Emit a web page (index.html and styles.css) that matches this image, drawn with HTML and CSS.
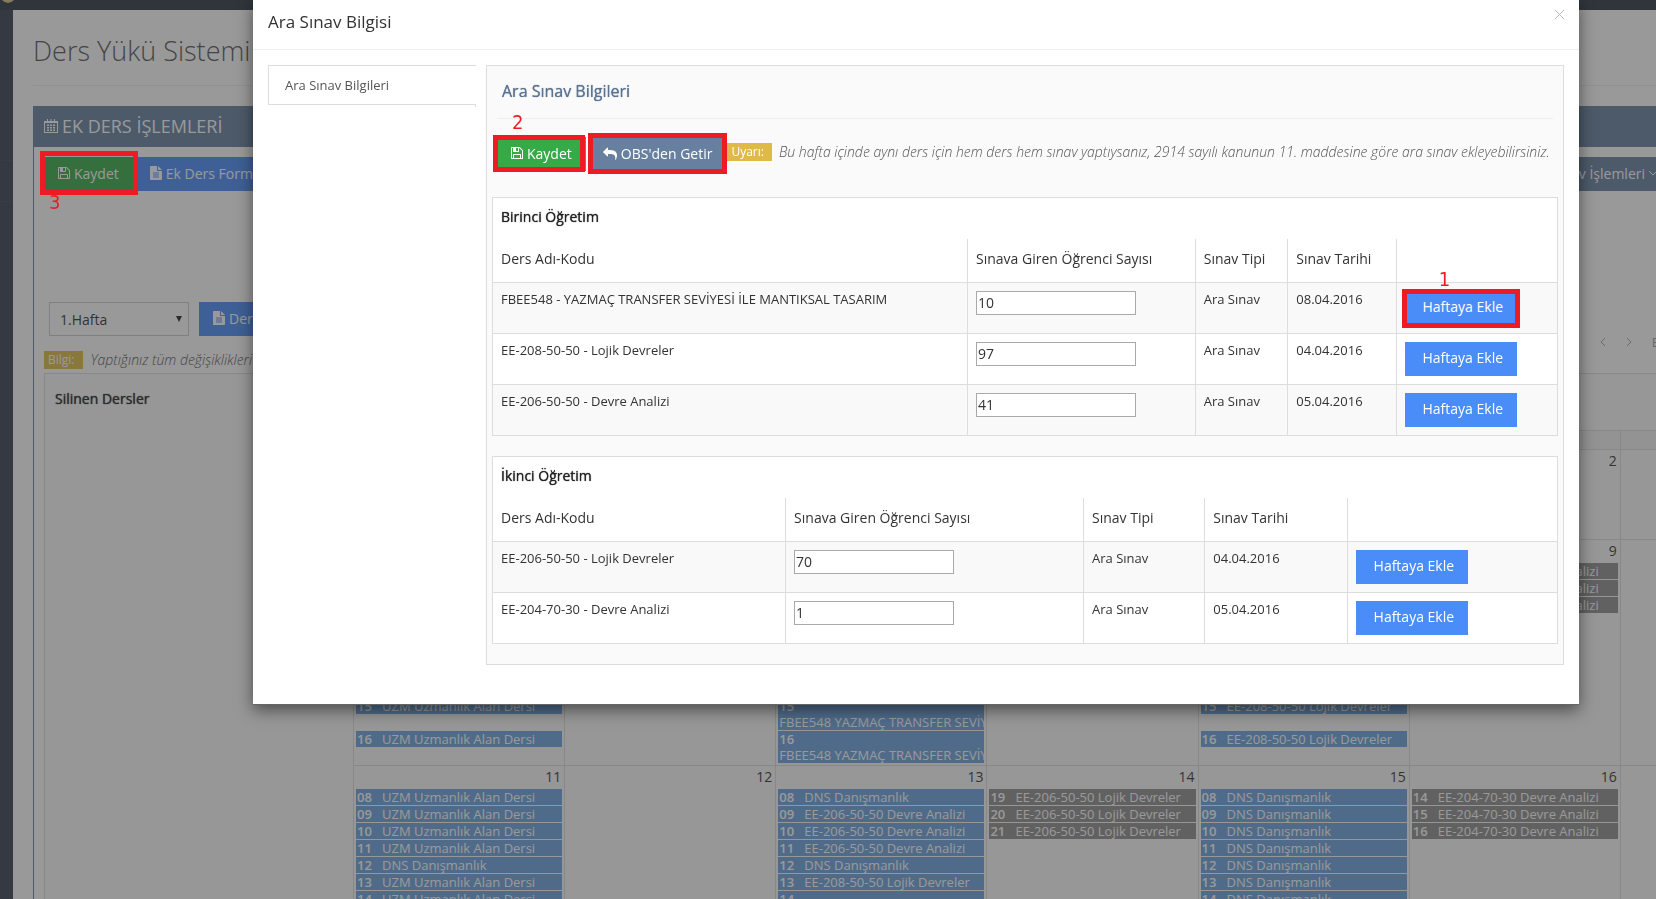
FILE: index.html
```html
<!DOCTYPE html>
<html lang="tr">
<head>
<meta charset="utf-8">
<title>Ders Yükü Sistemi</title>
<link rel="stylesheet" href="styles.css">
</head>
<body>
<svg class="sprite" aria-hidden="true">
  <symbol id="i-save" viewBox="0 0 1536 1536"><path d="M384 1408h768v-384H384v384zm896 0h128V512q0-14-10-38.500T1378 439l-281-281q-10-10-34-20t-39-10v416q0 40-28 68t-68 28H352q-40 0-68-28t-28-68V128H128v1280h128V992q0-40 28-68t68-28h832q40 0 68 28t28 68v416zM896 480V160q0-13-9.500-22.500T864 128H672q-13 0-22.500 9.500T640 160v320q0 13 9.500 22.500T672 512h192q13 0 22.500-9.500T896 480zm640 32v928q0 40-28 68t-68 28H96q-40 0-68-28t-28-68V96q0-40 28-68T96 0h928q40 0 88 20t76 48l280 280q28 28 48 76t20 88z"/></symbol>
  <symbol id="i-reply" viewBox="0 0 1792 1664"><path transform="matrix(-1 0 0 1 1792 0)" d="M1792 640q0 26-19 45l-512 512q-19 19-45 19t-45-19-19-45V896H928q-98 0-175.500 6t-154 21.500-133 42.500-105.500 69.500-80 101-48.500 138.500-17.500 181q0 55 5 123 0 6 2.500 23.500t2.500 26.500q0 15-8.500 25t-23.500 10q-16 0-28-17-7-9-13-22t-13.500-30-10.500-24Q0 1286 0 1120q0-199 53-333 162-403 875-403h224V128q0-26 19-45t45-19 45 19l512 512q19 19 19 45z"/></symbol>
  <symbol id="i-file" viewBox="0 0 12 14"><path fill-rule="evenodd" d="M0 .7Q0 0 .7 0H7v4.300q0 .7.700.700H12v8.300q0 .7-.7.700H.7q-.7 0-.7-.7zM3 6.500v1h6v-1zm0 2v1h6v-1zm0 2v1h6v-1zM8 0l4 4H8z"/></symbol>
  <symbol id="i-cal" viewBox="0 0 14 14"><path fill-rule="evenodd" d="M0 2h3V0h1v2h2.500V0h1v2H10V0h1v2h3v12H0zm1 2v9h12V4zm2 1.500h2V7H3zm3 0h2V7H6zm3 0h2V7H9zM3 8h2v1.500H3zm3 0h2v1.500H6zm3 0h2v1.500H9zM3 10.500h2V12H3zm3 0h2V12H6zm3 0h2V12H9z"/></symbol>
</svg>

<header class="topbar"><svg class="logo" viewBox="0 0 16 4" aria-hidden="true"><path d="M2 0h12q-6 6-12 0z" fill="#d8c48c"/></svg></header>
<div class="shell">
  <nav class="sidebar"><span></span><span></span></nav>
  <main class="content">
    <h1>Ders Yükü Sistemi</h1>
    <section class="portlet">
      <h2 class="caption"><svg class="ic-cal"><use href="#i-cal"/></svg>EK DERS İŞLEMLERİ</h2>
      <div class="toolbar">
        <span class="mark mark3"><button class="btn green"><svg class="ic"><use href="#i-save"/></svg>Kaydet</button><b class="num">3</b></span>
        <button class="btn blue wide"><svg class="ic ic-file"><use href="#i-file"/></svg>Ek Ders Form</button>
        <button class="btn hoki right">Sınav İşlemleri<svg class="chev" viewBox="0 0 8 8"><path d="M0 2l4 4 4-4"/></svg></button>
      </div>
      <div class="weekbar">
        <select aria-label="Hafta"><option>1.Hafta</option></select>
        <button class="btn blue"><svg class="ic ic-file"><use href="#i-file"/></svg>Der</button>
        <div class="pager">
          <button aria-label="Önceki"><svg viewBox="0 0 6 10"><path d="M5 1L1 5l4 4"/></svg></button>
          <button aria-label="Sonraki"><svg viewBox="0 0 6 10"><path d="M1 1l4 4-4 4"/></svg></button>
          <button>Bugün</button>
        </div>
      </div>
      <p class="note"><span class="label">Bilgi:</span><em>Yaptığınız tüm değişiklikleri</em></p>
      <div class="planner">
        <aside><h3>Silinen Dersler</h3></aside>
        <table class="calendar">
          <thead><tr><th></th><th></th><th></th><th></th><th></th><th></th><th></th></tr></thead>
          <tbody>
            <tr class="first"><td></td><td></td><td></td><td></td><td></td><td><i>2</i></td><td></td></tr>
            <tr class="second">
              <td><div class="later"><p class="ev"><b>15</b>UZM Uzmanlık Alan Dersi</p><p class="ev gap"><b>16</b>UZM Uzmanlık Alan Dersi</p></div></td>
              <td></td>
              <td><div class="later"><p class="ev two"><b>15</b><br>FBEE548 YAZMAÇ TRANSFER SEVİYESİ</p><p class="ev two"><b>16</b><br>FBEE548 YAZMAÇ TRANSFER SEVİYESİ</p></div></td>
              <td></td>
              <td><div class="later"><p class="ev"><b>15</b>EE-208-50-50 Lojik Devreler</p><p class="ev gap"><b>16</b>EE-208-50-50 Lojik Devreler</p></div></td>
              <td><i>9</i><p class="ev gray"><b>14</b>EE-204-70-30 Devre Analizi</p><p class="ev gray"><b>15</b>EE-204-70-30 Devre Analizi</p><p class="ev gray"><b>16</b>EE-204-70-30 Devre Analizi</p></td>
              <td></td>
            </tr>
            <tr>
              <td><i>11</i><p class="ev"><b>08</b>UZM Uzmanlık Alan Dersi</p><p class="ev"><b>09</b>UZM Uzmanlık Alan Dersi</p><p class="ev"><b>10</b>UZM Uzmanlık Alan Dersi</p><p class="ev"><b>11</b>UZM Uzmanlık Alan Dersi</p><p class="ev"><b>12</b>DNS Danışmanlık</p><p class="ev"><b>13</b>UZM Uzmanlık Alan Dersi</p><p class="ev"><b>14</b>UZM Uzmanlık Alan Dersi</p></td>
              <td><i>12</i></td>
              <td><i>13</i><p class="ev"><b>08</b>DNS Danışmanlık</p><p class="ev"><b>09</b>EE-206-50-50 Devre Analizi</p><p class="ev"><b>10</b>EE-206-50-50 Devre Analizi</p><p class="ev"><b>11</b>EE-206-50-50 Devre Analizi</p><p class="ev"><b>12</b>DNS Danışmanlık</p><p class="ev"><b>13</b>EE-208-50-50 Lojik Devreler</p><p class="ev"><b>14</b></p></td>
              <td><i>14</i><p class="ev gray"><b>19</b>EE-206-50-50 Lojik Devreler</p><p class="ev gray"><b>20</b>EE-206-50-50 Lojik Devreler</p><p class="ev gray"><b>21</b>EE-206-50-50 Lojik Devreler</p></td>
              <td><i>15</i><p class="ev"><b>08</b>DNS Danışmanlık</p><p class="ev"><b>09</b>DNS Danışmanlık</p><p class="ev"><b>10</b>DNS Danışmanlık</p><p class="ev"><b>11</b>DNS Danışmanlık</p><p class="ev"><b>12</b>DNS Danışmanlık</p><p class="ev"><b>13</b>DNS Danışmanlık</p><p class="ev"><b>14</b>DNS Danışmanlık</p></td>
              <td><i>16</i><p class="ev gray"><b>14</b>EE-204-70-30 Devre Analizi</p><p class="ev gray"><b>15</b>EE-204-70-30 Devre Analizi</p><p class="ev gray"><b>16</b>EE-204-70-30 Devre Analizi</p></td>
              <td></td>
            </tr>
          </tbody>
        </table>
      </div>
    </section>
  </main>
</div>

<div class="backdrop"></div>
<div class="modal" role="dialog" aria-labelledby="modal-title">
  <div class="modal-head">
    <h2 id="modal-title">Ara Sınav Bilgisi</h2>
    <button class="close" aria-label="Kapat"><svg viewBox="0 0 9 9"><path d="M0 0l9 9M9 0L0 9"/></svg></button>
  </div>
  <div class="modal-body">
    <nav class="tabs"><a href="#sinav">Ara Sınav Bilgileri</a></nav>
    <section class="pane" id="sinav">
      <h3>Ara Sınav Bilgileri</h3>
      <div class="actions">
        <span class="mark mark2"><button class="btn green"><svg class="ic"><use href="#i-save"/></svg>Kaydet</button><b class="num">2</b></span>
        <span class="mark markobs"><button class="btn hoki"><svg class="ic ic-reply"><use href="#i-reply"/></svg>OBS'den Getir</button></span>
        <p class="warn"><span class="label">Uyarı:</span><em>Bu hafta içinde aynı ders için hem ders hem sınav yaptıysanız, 2914 sayılı kanunun 11. maddesine göre ara sınav ekleyebilirsiniz.</em></p>
      </div>
      <div class="box">
        <h4>Birinci Öğretim</h4>
        <table class="grid one">
          <colgroup><col class="c1"><col class="c2"><col class="c3"><col class="c4"><col></colgroup>
          <thead><tr><th>Ders Adı-Kodu</th><th>Sınava Giren Öğrenci Sayısı</th><th>Sınav Tipi</th><th>Sınav Tarihi</th><th></th></tr></thead>
          <tbody>
            <tr><td>FBEE548 - YAZMAÇ TRANSFER SEVİYESİ İLE MANTIKSAL TASARIM</td><td><input type="text" aria-label="Öğrenci sayısı" value="10"></td><td>Ara Sınav</td><td>08.04.2016</td><td><span class="mark mark1"><button class="btn blue add">Haftaya Ekle</button><b class="num">1</b></span></td></tr>
            <tr><td>EE-208-50-50 - Lojik Devreler</td><td><input type="text" aria-label="Öğrenci sayısı" value="97"></td><td>Ara Sınav</td><td>04.04.2016</td><td><button class="btn blue add">Haftaya Ekle</button></td></tr>
            <tr><td>EE-206-50-50 - Devre Analizi</td><td><input type="text" aria-label="Öğrenci sayısı" value="41"></td><td>Ara Sınav</td><td>05.04.2016</td><td><button class="btn blue add">Haftaya Ekle</button></td></tr>
          </tbody>
        </table>
      </div>
      <div class="box">
        <h4>İkinci Öğretim</h4>
        <table class="grid two">
          <colgroup><col class="c1"><col class="c2"><col class="c3"><col class="c4"><col></colgroup>
          <thead><tr><th>Ders Adı-Kodu</th><th>Sınava Giren Öğrenci Sayısı</th><th>Sınav Tipi</th><th>Sınav Tarihi</th><th></th></tr></thead>
          <tbody>
            <tr><td>EE-206-50-50 - Lojik Devreler</td><td><input type="text" aria-label="Öğrenci sayısı" value="70"></td><td>Ara Sınav</td><td>04.04.2016</td><td><button class="btn blue add">Haftaya Ekle</button></td></tr>
            <tr><td>EE-204-70-30 - Devre Analizi</td><td><input type="text" aria-label="Öğrenci sayısı" value="1"></td><td>Ara Sınav</td><td>05.04.2016</td><td><button class="btn blue add">Haftaya Ekle</button></td></tr>
          </tbody>
        </table>
      </div>
    </section>
  </div>
</div>
</body>
</html>
```
FILE: styles.css
```css
* { box-sizing: border-box; }
html, body { height: 100%; }
body { margin: 0; overflow: hidden; background: #364150; color: #333; font: 13px/20px "Open Sans", "Noto Sans", sans-serif; }
h1, h2, h3, h4, p { margin: 0; font-weight: 400; }
button, input, select { font-family: inherit; color: inherit; }
button { border: 0; background: none; padding: 0; }
svg { fill: currentColor; flex: none; }
.sprite { position: absolute; width: 0; height: 0; }

.topbar { height: 10px; background: #2b3643; }
.logo { display: block; width: 16px; height: 4px; }
.shell { display: flex; }
.sidebar { width: 13px; flex: none; padding-top: 150px; }
.sidebar span { display: block; height: 41px; border-top: 1px solid #3d4957; }
.content { flex: none; width: calc(100% + 179px); background: #fff; padding: 24px 14px 0 20px; }
h1 { font-size: 27px; font-weight: 300; line-height: 34px; color: #555; padding-bottom: 17px; border-bottom: 1px solid #eee; margin-bottom: 20px; }

.portlet { border: 1px solid #67809f; border-top: 0; }
.caption { display: flex; align-items: center; gap: 4px; height: 41px; padding: 0 0 2px 10px; background: #67809f; color: #fff; font-size: 18px; }
.ic-cal { width: 14px; height: 14px; }
.toolbar { display: flex; gap: 5px; padding: 10px 10px 0; }
.btn { display: inline-flex; align-items: center; height: 34px; padding: 0 14px 2px; gap: 4px; color: #fff; font-size: 14px; white-space: nowrap; }
.green { background: #35aa47; }
.blue { background: #4b8df8; }
.hoki { background: #67809f; }
.ic { width: 12px; height: 12px; }
.ic-file { height: 14px; }
.ic-reply { width: 14px; height: 13px; }
.toolbar .green { padding: 0 14px 2px; }
.wide { width: 160px; padding: 0 12px 2px; }
.right { margin-left: auto; margin-right: 152px; }
.chev { width: 8px; height: 8px; fill: none; stroke: currentColor; }
.weekbar { display: flex; align-items: flex-start; gap: 10px; padding: 111px 15px 0; }
select { width: 140px; height: 34px; padding: 0 10px; border: 1px solid #ccc; font-size: 14px; appearance: none; background: url("data:image/svg+xml,%3Csvg xmlns='http://www.w3.org/2000/svg' width='6' height='6'%3E%3Cpath d='M0 0h6L3 6z' fill='%23222'/%3E%3C/svg%3E") no-repeat right 6px center #fff; }
.pager { display: flex; align-items: center; gap: 20px; height: 34px; margin: 23px 126px -23px auto; color: #a0a0a0; font-size: 14px; }
.pager svg { display: block; width: 6px; height: 10px; fill: none; stroke: currentColor; }
.note { display: flex; align-items: center; gap: 8px; padding: 15px 10px 4px; color: #555; line-height: 18px; }
.note em, .warn em { font-size: 14px; font-weight: 300; }
.label { padding: 0 8px 0 4px; background: #dfba49; color: #fff; font-size: 12px; line-height: 18px; }
.planner { display: flex; border: 1px solid #ddd; background: #fafafa; margin-left: 10px; }
.planner aside { width: 308px; flex: none; padding: 15px 10px; }
.planner h3, .pane h3, .box h4 { font-size: 14px; color: #222; text-shadow: 0 0 1px currentColor; }

.calendar { flex: 1; min-width: 0; margin-top: 56px; border-collapse: collapse; table-layout: fixed; width: 100%; }
.calendar th, .calendar td { border: 1px solid #ddd; padding: 0 2px; vertical-align: top; }
.calendar th { height: 19px; background: #f2f2f2; }
.calendar td { height: 225px; }
.calendar .first td { height: 90px; }
.calendar .second td { height: 226px; }
.calendar i { display: block; height: 23px; padding-right: 1px; font-style: normal; text-align: right; font-size: 14px; line-height: 22px; }
.ev { height: 16px; margin-bottom: 1px; padding-left: 1px; overflow: hidden; background: #6ba3de; color: #fff; line-height: 16px; white-space: nowrap; }
.ev b { display: inline-block; width: 25px; font-weight: 600; }
.gray { background: #8e8e8e; }
.later { padding-top: 158px; }
.gap { margin-top: 17px; }
.two { height: 32px; }

.backdrop { position: fixed; inset: 0; z-index: 10; background: #333; opacity: .5; }
.modal { position: absolute; top: 0; left: 253px; right: 77px; z-index: 20; background: #fff; border-bottom: 1px solid #666; box-shadow: 0 5px 15px rgba(0, 0, 0, .5); padding-bottom: 39px; }
.modal-head { display: flex; justify-content: space-between; align-items: flex-start; height: 50px; padding: 9px 15px 0; border-bottom: 1px solid #efefef; }
.modal-head h2 { font-size: 17px; line-height: 26px; font-weight: 400; }
.close { color: #bbb; padding: 1px 0; }
.close svg { display: block; width: 9px; height: 9px; stroke: currentColor; }
.modal-body { display: flex; gap: 10px; padding: 15px 15px 0; }
.tabs { width: 208px; flex: none; }
.tabs a { display: block; height: 40px; padding: 0 16px; border: 1px solid #ddd; border-right: 0; color: #555; line-height: 38px; text-decoration: none; }
.tabs::after { content: ""; display: block; width: 1px; height: 2px; margin-left: auto; background: #ddd; }
.pane { flex: 1; min-width: 0; background: #fafafa; border: 1px solid #ddd; padding: 0 5px 20px; }
.pane h3 { margin: 0 5px; padding: 13px 5px 14px; border-bottom: 1px solid #eee; color: #5b7391; font-size: 16px; line-height: 25px; }
.actions { display: flex; align-items: flex-start; gap: 4px; height: 78px; padding: 18px 5px 0; }
.actions .hoki { padding: 0 13px 2px; }
.warn { display: flex; align-items: center; gap: 7px; padding-top: 6px; margin-left: -2px; color: #555; line-height: 18px; white-space: nowrap; }
.box { background: #fff; border: 1px solid #ddd; margin-bottom: 20px; }
.box:last-child { margin-bottom: 0; }
.box h4 { padding: 9px 8px 12px; line-height: 20px; }
.grid { width: 100%; border-collapse: collapse; table-layout: fixed; }
.grid th, .grid td { padding: 8px; text-align: left; vertical-align: top; border-left: 1px solid #ddd; }
.grid th:first-child, .grid td:first-child { border-left: 0; padding-left: 8px; }
.grid th { height: 43px; padding-top: 10px; font-size: 14px; font-weight: 400; }
.grid td { height: 51px; border-top: 1px solid #ddd; line-height: 17px; }
.grid tbody tr:nth-child(odd) { background: #f9f9f9; }
.one .c1 { width: 44.6%; } .one .c2 { width: 21.4%; } .one .c3 { width: 8.7%; } .one .c4 { width: 10.2%; }
.two .c1 { width: 27.5%; } .two .c2 { width: 28%; } .two .c3 { width: 11.4%; } .two .c4 { width: 13.4%; }
.grid input { display: block; width: 160px; max-width: 100%; height: 24px; padding: 1px; border: 1px solid #a9a9a9; font-size: 14px; background: #fff; }
.grid td .btn { display: flex; width: 112px; padding: 0 0 2px 4px; justify-content: center; }

.mark { position: relative; display: inline-flex; }
.mark::after { content: ""; position: absolute; z-index: 30; border: 5px solid #ed1c24; inset: -2px -3px -3px; pointer-events: none; }
.num { position: absolute; z-index: 31; color: #ed1c24; font: 20px/20px "DejaVu Sans Condensed", "DejaVu Sans", sans-serif; }
.mark1 .num { left: 34px; top: -22px; }
.mark2 .num { left: 15px; top: -25px; }
.mark3 .num { left: 5px; top: 35px; }
.mark3::after { inset: -6px -5px -4px -4px; }
.mark2::after { inset: -2px 1px -1px -4px; }
.markobs::after { inset: -4px -2px -3px; }
```
